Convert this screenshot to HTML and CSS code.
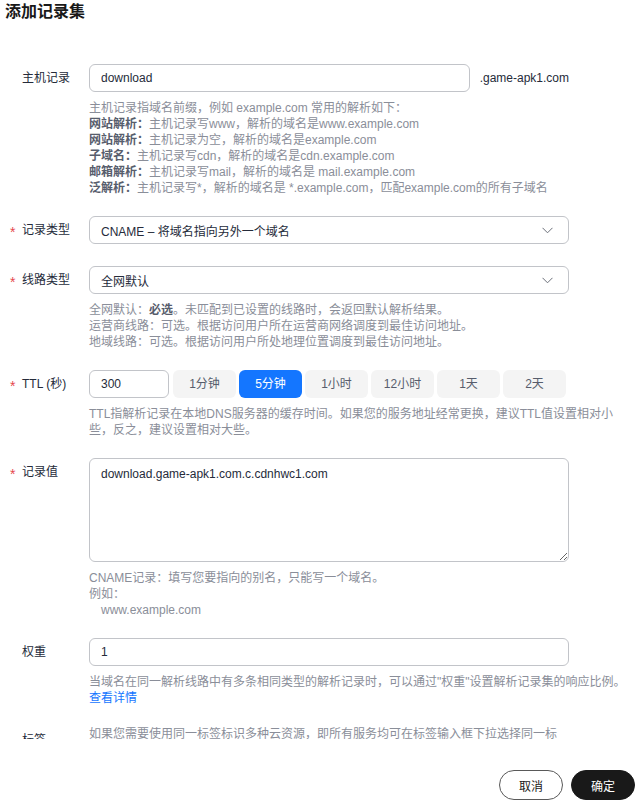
FILE: index.html
```html
<!DOCTYPE html>
<html lang="zh-CN">
<head>
	<meta charset="UTF-8">
	<title>添加记录集</title>
	<link rel="stylesheet" href="styles.css">
</head>
<body>
	<div class="title">添加记录集</div>
	<div class="main">
		<div class="row">
			<div class="label">主机记录</div>
			<div class="ctrl">
				<div class="host">
					<input class="ipt" type="text" value="download">
					<span class="suffix">.game-apk1.com</span>
				</div>
				<div class="help">
					主机记录指域名前缀，例如 example.com 常用的解析如下：<br>
					<b>网站解析：</b>主机记录写www，解析的域名是www.example.com<br>
					<b>网站解析：</b>主机记录为空，解析的域名是example.com<br>
					<b>子域名：</b>主机记录写cdn，解析的域名是cdn.example.com<br>
					<b>邮箱解析：</b>主机记录写mail，解析的域名是 mail.example.com<br>
					<b>泛解析：</b>主机记录写*，解析的域名是 *.example.com，匹配example.com的所有子域名
				</div>
			</div>
		</div>
		<div class="row">
			<div class="label"><span class="req">*</span>记录类型</div>
			<div class="ctrl">
				<div class="ipt sel">
					<span>CNAME – 将域名指向另外一个域名</span>
					<svg width="11" height="7" viewBox="0 0 11 7"><polyline points="0.5,0.8 5.5,5.8 10.5,0.8" fill="none" stroke="#6b6f79" stroke-width="1"/></svg>
				</div>
			</div>
		</div>
		<div class="row">
			<div class="label"><span class="req">*</span>线路类型</div>
			<div class="ctrl">
				<div class="ipt sel">
					<span>全网默认</span>
					<svg width="11" height="7" viewBox="0 0 11 7"><polyline points="0.5,0.8 5.5,5.8 10.5,0.8" fill="none" stroke="#6b6f79" stroke-width="1"/></svg>
				</div>
				<div class="help">
					全网默认：<b>必选</b>。未匹配到已设置的线路时，会返回默认解析结果。<br>
					运营商线路：可选。根据访问用户所在运营商网络调度到最佳访问地址。<br>
					地域线路：可选。根据访问用户所处地理位置调度到最佳访问地址。
				</div>
			</div>
		</div>
		<div class="row">
			<div class="label"><span class="req">*</span>TTL (秒)</div>
			<div class="ctrl">
				<div class="ttl">
					<input class="ipt ttl-ipt" type="text" value="300">
					<div class="opts">
						<span class="opt">1分钟</span>
						<span class="opt active">5分钟</span>
						<span class="opt">1小时</span>
						<span class="opt">12小时</span>
						<span class="opt">1天</span>
						<span class="opt">2天</span>
					</div>
				</div>
				<div class="help nowrap">TTL指解析记录在本地DNS服务器的缓存时间。如果您的服务地址经常更换，建议TTL值设置相对小<br>些，反之，建议设置相对大些。</div>
			</div>
		</div>
		<div class="row">
			<div class="label"><span class="req">*</span>记录值</div>
			<div class="ctrl">
				<textarea class="ipt area">download.game-apk1.com.c.cdnhwc1.com</textarea>
				<div class="help">
					CNAME记录：填写您要指向的别名，只能写一个域名。<br>
					例如：<br>
					<span class="indent">www.example.com</span>
				</div>
			</div>
		</div>
		<div class="row">
			<div class="label">权重</div>
			<div class="ctrl">
				<input class="ipt" type="text" value="1">
				<div class="help nowrap">
					当域名在同一解析线路中有多条相同类型的解析记录时，可以通过"权重"设置解析记录集的响应比例。<br>
					<a class="link" href="#">查看详情</a>
				</div>
			</div>
		</div>
		<div class="row">
			<div class="label">标签</div>
			<div class="ctrl">
				<div class="help flat">如果您需要使用同一标签标识多种云资源，即所有服务均可在标签输入框下拉选择同一标签，建议在TMS中创建预定义标签。</div>
			</div>
		</div>
	</div>
	<div class="footer">
		<button class="btn">取消</button>
		<button class="btn primary">确定</button>
	</div>
</body>
</html>
```

FILE: styles.css
```css
*{
	margin: 0;
	padding: 0;
	box-sizing: border-box;
}
body{
	font-family: "Liberation Sans", "Noto Sans CJK SC", sans-serif;
	font-size: 12px;
	color: #252b3a;
	background: #fff;
}
.title{
	font-size: 16px;
	font-weight: bold;
	line-height: 24px;
	padding-left: 5px;
	color: #191919;
}
.main{
	height: 715px;
	overflow: hidden;
	padding-top: 40px;
}
.row{
	display: flex;
	margin-bottom: 20px;
}
.label{
	width: 89px;
	flex: none;
	padding-left: 22px;
	line-height: 28px;
	color: #252b3a;
}
.req{
	display: inline-block;
	width: 12px;
	margin-left: -12px;
	color: #e5484d;
	font-size: 14px;
	vertical-align: -3px;
}
.ctrl{
	width: 480px;
	flex: none;
}
.ipt{
	display: block;
	width: 100%;
	height: 28px;
	border: 1px solid #c2c4c9;
	border-radius: 6px;
	padding: 0 11px;
	font-family: inherit;
	font-size: 12px;
	color: #252b3a;
	background: #fff;
	outline: none;
}
.host{
	display: flex;
	align-items: center;
	gap: 10px;
}
.host .ipt{
	flex: 1;
}
.suffix{
	line-height: 28px;
	white-space: nowrap;
}
.sel{
	display: flex;
	align-items: center;
	justify-content: space-between;
	padding-right: 15px;
}
.help{
	margin-top: 8px;
	line-height: 16px;
	color: #8a8e99;
}
.help b{
	color: #575d6c;
}
.nowrap{
	white-space: nowrap;
}
.flat{
	margin-top: 0;
}
.indent{
	padding-left: 12px;
}
.link{
	color: #1476ff;
	text-decoration: none;
}
.ttl{
	display: flex;
}
.ttl-ipt{
	width: 80px;
	flex: none;
}
.opts{
	display: flex;
	gap: 3px;
	margin-left: 4px;
}
.opt{
	width: 63px;
	height: 28px;
	line-height: 28px;
	text-align: center;
	border-radius: 6px;
	background: #f4f4f4;
	color: #575d6c;
}
.opt.active{
	background: #1476ff;
	color: #fff;
}
.area{
	height: 104px;
	padding: 6px 11px;
	line-height: 18px;
	resize: vertical;
}
.footer{
	height: 62px;
	display: flex;
	justify-content: flex-end;
	gap: 8px;
	padding: 31px 9px 0 0;
}
.btn{
	width: 64px;
	height: 30px;
	border-radius: 15px;
	border: 1px solid #595959;
	background: #fff;
	color: #191919;
	font-family: inherit;
	font-size: 12px;
}
.btn.primary{
	background: #191919;
	border-color: #191919;
	color: #fff;
}
```
